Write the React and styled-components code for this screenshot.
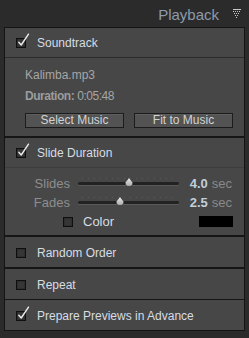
import { createGlobalStyle } from 'styled-components';
import styled from 'styled-components';

const GlobalStyle = createGlobalStyle`
  html, body {
    margin: 0;
    padding: 0;
    background: #2b2b2b;
  }
  body {
    font-family: 'Liberation Sans', Arial, sans-serif;
    font-size: 12px;
  }
`;

const Page = styled.div`
  width: 249px;
  height: 338px;
  background: #2b2b2b;
  overflow: hidden;
`;

const Header = styled.div`
  height: 27px;
  display: flex;
  justify-content: flex-end;
  align-items: center;
  gap: 14px;
  padding-right: 8px;
`;

const Title = styled.span`
  font-size: 15px;
  color: #8d9aab;
  padding-top: 2px;
`;

const Panel = styled.div`
  margin: 0 4px;
  border: 1px solid #141414;
  background: #161616;
  display: flex;
  flex-direction: column;
`;

const Section = styled.div`
  background: #474747;
  border-top: ${(p) => p.sep || 0}px solid #161616;
`;

const Row = styled.div`
  height: ${(p) => p.h || 30}px;
  display: flex;
  align-items: center;
  gap: 11px;
  padding: 1px 0 0 11px;
  box-sizing: border-box;
  color: #d6dde4;
  border-bottom: ${(p) => (p.line ? `1px solid ${p.line}` : 'none')};
`;

const Box = styled.span`
  position: relative;
  width: 8px;
  height: 8px;
  flex: none;
  border: 1px solid #0f0f0f;
  background: #363636;
  box-shadow: inset 0 0 0 1px #2e2e2e;
`;

const Tick = styled.svg`
  position: absolute;
  left: 0;
  top: -6px;
`;

const Body = styled.div`
  padding: 10px 11px 8px 20px;
  display: flex;
  flex-direction: column;
  gap: 6px;
  color: #a6a6a6;
`;

const Line = styled.div`
  height: 15px;
  line-height: 15px;
  letter-spacing: ${(p) => (p.tight ? '-0.45px' : 'normal')};
`;

const Strong = styled.b`
  color: #9c9c9c;
`;

const Buttons = styled.div`
  display: grid;
  grid-template-columns: 1fr 1fr;
  gap: 10px;
  margin-top: 3px;
`;

const Button = styled.button`
  height: 15px;
  padding: 0;
  font: inherit;
  font-size: 12px;
  line-height: 13px;
  color: #d2d2d2;
  background: #535353;
  border: 1px solid #1c1c1c;
  box-shadow: inset 0 1px 0 #5e5e5e;
`;

const SliderBody = styled.div`
  padding: 6px 0 4px 0;
  display: flex;
  flex-direction: column;
`;

const SliderRow = styled.div`
  height: 19px;
  display: grid;
  grid-template-columns: 65px 101px 1fr auto;
  column-gap: 8px;
  align-items: center;
  padding-right: 12px;
`;

const SliderLabel = styled.span`
  text-align: right;
  color: #8e8e8e;
  font-size: 13px;
`;

const Track = styled.div`
  position: relative;
  height: 3px;
  border-radius: 2px;
  background: #222;
  box-shadow: 0 1px 0 #5a5a5a;
  &::before {
    content: '';
    position: absolute;
    left: 4px;
    right: 4px;
    top: -4px;
    height: 1px;
    background: repeating-linear-gradient(90deg, #5a5a5a 0 1px, transparent 1px 6px);
  }
`;

const Thumb = styled.svg`
  position: absolute;
  top: -5px;
  margin-left: -5px;
`;

const Value = styled.span`
  text-align: right;
  color: #c2cfdc;
  font-size: 13px;
  font-weight: bold;
  margin-right: -4px;
`;

const Unit = styled.span`
  color: #8a8a8a;
  font-size: 13px;
`;

const ColorRow = styled.div`
  height: 19px;
  display: flex;
  align-items: center;
  gap: 10px;
  padding: 0 11px 0 58px;
  color: #d6dde4;
  font-size: 13px;
`;

const Swatch = styled.span`
  margin-left: auto;
  width: 34px;
  height: 11px;
  background: #000;
`;

function Check({ on }) {
  return (
    <Box>
      {on && (
        <Tick width="13" height="14" viewBox="0 0 13 14">
          <path d="M1.8 9.2 L4.2 12 L11.5 1.2" fill="none" stroke="#ececec" strokeWidth="1.4" strokeLinecap="round" strokeLinejoin="round" />
        </Tick>
      )}
    </Box>
  );
}

function DotTriangle() {
  const dots = [];
  const rows = [4, 3, 2, 1];
  rows.forEach((n, r) => {
    for (let i = 0; i < n; i++) {
      dots.push(<rect key={`${r}-${i}`} x={r + i * 2} y={r * 2} width="1" height="1" fill="#c8c8c8" />);
    }
  });
  return (
    <svg width="8" height="9" viewBox="0 0 8 9">
      <rect x="0" y="0" width="8" height="1" fill="#c8c8c8" />
      <g transform="translate(0 2)">{dots}</g>
    </svg>
  );
}

function Slider({ label, value, pct }) {
  return (
    <SliderRow>
      <SliderLabel>{label}</SliderLabel>
      <Track>
        <Thumb width="10" height="10" viewBox="0 0 10 10" style={{ left: `${pct}%` }}>
          <defs>
            <linearGradient id="tg" x1="0" y1="0" x2="0" y2="1">
              <stop offset="0" stopColor="#f0f0f0" />
              <stop offset="1" stopColor="#a8a8a8" />
            </linearGradient>
          </defs>
          <path d="M5 0.5 L8.6 5.2 Q9.2 9.5 5 9.5 Q0.8 9.5 1.4 5.2 Z" fill="url(#tg)" stroke="#2a2a2a" strokeWidth="0.6" />
        </Thumb>
      </Track>
      <Value>{value}</Value>
      <Unit>sec</Unit>
    </SliderRow>
  );
}

export default function App() {
  return (
    <Page>
      <GlobalStyle />
      <Header>
        <Title>Playback</Title>
        <DotTriangle />
      </Header>
      <Panel>
        <Section>
          <Row line="#2c2c2c">
            <Check on />
            Soundtrack
          </Row>
          <Body>
            <Line>Kalimba.mp3</Line>
            <Line tight>
              <Strong>Duration:</Strong> 0:05:48
            </Line>
            <Buttons>
              <Button>Select Music</Button>
              <Button>Fit to Music</Button>
            </Buttons>
          </Body>
        </Section>
        <Section sep={2}>
          <Row line="#3d3d3d">
            <Check on />
            Slide Duration
          </Row>
          <SliderBody>
            <Slider label="Slides" value="4.0" pct={50.5} />
            <Slider label="Fades" value="2.5" pct={41.6} />
            <ColorRow>
              <Check />
              Color
              <Swatch />
            </ColorRow>
          </SliderBody>
        </Section>
        <Section sep={2}>
          <Row>
            <Check />
            Random Order
          </Row>
        </Section>
        <Section sep={2}>
          <Row>
            <Check />
            Repeat
          </Row>
        </Section>
        <Section sep={1}>
          <Row>
            <Check on />
            Prepare Previews in Advance
          </Row>
        </Section>
      </Panel>
    </Page>
  );
}
